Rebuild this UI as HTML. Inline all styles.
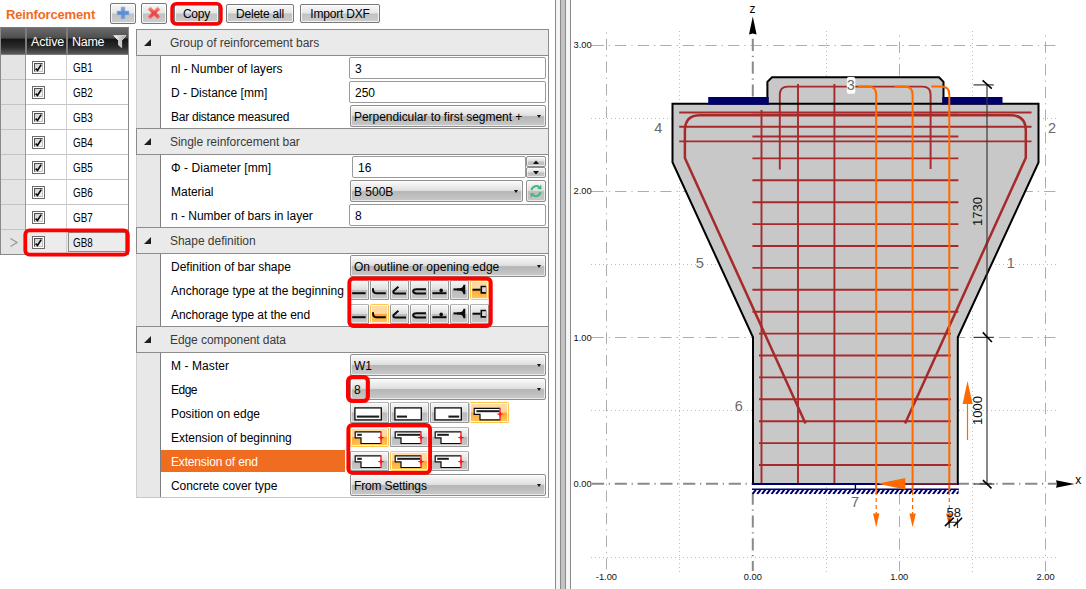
<!DOCTYPE html>
<html>
<head>
<meta charset="utf-8">
<title>Reinforcement</title>
<style>
html,body{margin:0;padding:0;background:#fff;}
body{width:1086px;height:589px;position:relative;overflow:hidden;font-family:"Liberation Sans",sans-serif;font-size:12px;color:#000;}
.abs{position:absolute;}
.t{position:absolute;white-space:nowrap;line-height:14px;font-size:12px;letter-spacing:0;}
#title{left:6px;top:6.5px;font-size:13px;font-weight:bold;color:#f06a1c;letter-spacing:-0.15px;line-height:16px;}
.btn{position:absolute;box-sizing:border-box;border:1px solid #787878;border-radius:2px;
  background:linear-gradient(#f8f8f8 0%,#e6e6e6 47%,#c2c2c2 53%,#cdcdcd 100%);
  box-shadow:inset 0 0 0 1px rgba(255,255,255,.75);text-align:center;font-size:12px;line-height:18px;letter-spacing:-0.2px;white-space:nowrap;}
/* table */
#tbl{left:0;top:27px;width:129px;height:228px;background:#fff;}
#thead{left:0;top:27px;width:129px;height:28px;box-sizing:border-box;border-bottom:1px solid #7c7c7c;background:linear-gradient(#6e6e6e 0%,#4e4e4e 40%,#161616 46%,#2c2c2c 75%,#5a5a5a 100%);}
.hsep{position:absolute;top:27px;width:2px;height:28px;background:#7c7c7c;}
.hl{position:absolute;background:#c4c4c4;}
.cb{position:absolute;left:32px;width:13px;height:13px;box-sizing:border-box;border:1px solid #6a6a6a;background:#fff;}
.cb i{position:absolute;left:1px;top:1px;width:9px;height:9px;box-sizing:border-box;border:1px solid #c4c4c4;border-top-color:#505050;border-left-color:#505050;background:linear-gradient(135deg,#cfcfcf,#f8f8f8);display:block;}
.cb svg{position:absolute;left:1px;top:1px;}
.rowh{position:absolute;left:1px;width:24px;height:24px;background:#e4e4e4;}
/* property grid */
#pg{left:136px;top:29px;width:413px;height:469px;box-sizing:border-box;border:1px solid #8e8e8e;border-left-color:#cfcfcf;border-bottom-color:#c6c6c6;background:#fff;}
.gh{position:absolute;left:136px;width:412px;height:27px;box-sizing:border-box;background:#eaeaea;border-top:1px solid #8c8c8c;border-bottom:1px solid #8c8c8c;border-left:1px solid #8c8c8c;}
.gh + .gh{}
.ind{position:absolute;left:137px;width:23px;background:#e8e8e8;border-right:1px solid #7e7e7e;}
.tri{position:absolute;left:144px;width:0;height:0;border-left:7px solid transparent;border-bottom:7px solid #1e1e1e;}
.ght{color:#3a3a3a;left:170px;}
.lbl{left:171px;}
.inp{position:absolute;box-sizing:border-box;border:1px solid #9a9a9a;border-radius:2px;background:#fff;left:349px;width:197px;height:22px;}
.dd{position:absolute;box-sizing:border-box;border:1px solid #8e8e8e;border-radius:2px;left:350px;width:196px;height:22px;
  background:linear-gradient(#fbfbfb 0%,#e0e0e0 47%,#b6b6b6 53%,#c9c9c9 100%);box-shadow:inset 0 0 0 1px rgba(255,255,255,.6);}
.dd:after{content:"";position:absolute;right:4.5px;top:9px;border-left:2.8px solid transparent;border-right:2.8px solid transparent;border-top:3.3px solid #111;}
.v{left:355px;}
.ib{position:absolute;box-sizing:border-box;border:1px solid #979797;border-top-color:#b4b4b4;border-radius:1.5px;background:linear-gradient(#f8f8f8 0%,#dedede 47%,#bbbbbb 53%,#c8c8c8 100%);box-shadow:inset 0 0 0 1px rgba(255,255,255,.55);}
.ib.on{border-color:#ffc64a;background:linear-gradient(#ffdcaa 0%,#ffd7a0 47%,#ffa733 53%,#ffc95e 100%);box-shadow:inset 0 0 0 1px rgba(255,255,255,.8);}
.sb{position:absolute;box-sizing:border-box;border:1px solid #8e8e8e;border-radius:2px;background:linear-gradient(#f8f8f8 0%,#e0e0e0 47%,#bcbcbc 53%,#c8c8c8 100%);box-shadow:inset 0 0 0 1px rgba(255,255,255,.6);}
</style>
</head>
<body>
<!-- LEFT: title + toolbar -->
<div id="title" class="t">Reinforcement</div>
<div class="btn" style="left:110px;top:3px;width:26px;height:21px;"></div>
<div class="btn" style="left:141px;top:3px;width:26px;height:21px;"></div>
<div class="btn" style="left:174px;top:4px;width:45px;height:19px;">Copy</div>
<div class="btn" style="left:226px;top:4px;width:68px;height:19px;">Delete all</div>
<div class="btn" style="left:300px;top:4px;width:80px;height:19px;">Import DXF</div>
<svg class="abs" style="left:110px;top:3px" width="57" height="21" viewBox="0 0 57 21">
<defs>
<linearGradient id="gpl" x1="0" y1="0" x2="0" y2="1"><stop offset="0" stop-color="#7fa9dc"/><stop offset="0.5" stop-color="#5a8dce"/><stop offset="1" stop-color="#6f9bd6"/></linearGradient>
<linearGradient id="gx" x1="0" y1="0" x2="0" y2="1"><stop offset="0" stop-color="#f68c8c"/><stop offset="0.5" stop-color="#ee3e3e"/><stop offset="1" stop-color="#f26060"/></linearGradient>
</defs>
<path d="M11 4H15V8H19V12H15V16H11V12H7V8H11Z" fill="url(#gpl)" stroke="#9dbde6" stroke-width="0.8" stroke-opacity="0.7"/>
<path d="M40.50 4.00L44.05 7.50L47.60 4.00L50.10 6.50L46.55 10.00L50.10 13.50L47.60 16.00L44.05 12.50L40.50 16.00L38.00 13.50L41.55 10.00L38.00 6.50Z" fill="url(#gx)" stroke="#f59a9a" stroke-width="0.7" stroke-opacity="0.7"/>
</svg>


<!-- LEFT: table -->
<div id="tbl" class="abs"></div>
<div id="thead" class="abs"></div>
<div class="hsep" style="left:25px"></div><div class="hsep" style="left:66px"></div>
<div class="t" style="left:31px;top:35px;color:#fff;font-size:12.5px;letter-spacing:-0.15px;">Active</div>
<div class="t" style="left:72px;top:35px;color:#fff;font-size:12.5px;letter-spacing:-0.3px;">Name</div>
<svg class="abs" style="left:112px;top:34px" width="15" height="15" viewBox="0 0 15 15"><defs><linearGradient id="fg" x1="0" x2="1"><stop offset="0" stop-color="#fff"/><stop offset="1" stop-color="#9a9a9a"/></linearGradient></defs><path d="M1.6 1.6 L14 1.6 L9.6 6.6 L9.6 13.6 L6.6 11 L6.6 6.6 Z" fill="url(#fg)" stroke="#e8e8e8" stroke-width="0.8"/></svg>
<div class="rowh" style="top:55px"></div>
<div class="hl" style="left:0;top:79px;width:129px;height:1px;"></div>
<div class="cb" style="top:61px"><i></i><svg width="9" height="9" viewBox="0 0 9 9"><path d="M1.6 5.6 L3.5 7.4 L7.2 1.6" fill="none" stroke="#0a0a0a" stroke-width="1.7"/></svg></div>
<div class="t" style="left:72.5px;top:61px;font-size:12.3px;transform:scaleX(0.8);transform-origin:0 0;">GB1</div>
<div class="rowh" style="top:80px"></div>
<div class="hl" style="left:0;top:104px;width:129px;height:1px;"></div>
<div class="cb" style="top:86px"><i></i><svg width="9" height="9" viewBox="0 0 9 9"><path d="M1.6 5.6 L3.5 7.4 L7.2 1.6" fill="none" stroke="#0a0a0a" stroke-width="1.7"/></svg></div>
<div class="t" style="left:72.5px;top:86px;font-size:12.3px;transform:scaleX(0.8);transform-origin:0 0;">GB2</div>
<div class="rowh" style="top:105px"></div>
<div class="hl" style="left:0;top:129px;width:129px;height:1px;"></div>
<div class="cb" style="top:111px"><i></i><svg width="9" height="9" viewBox="0 0 9 9"><path d="M1.6 5.6 L3.5 7.4 L7.2 1.6" fill="none" stroke="#0a0a0a" stroke-width="1.7"/></svg></div>
<div class="t" style="left:72.5px;top:111px;font-size:12.3px;transform:scaleX(0.8);transform-origin:0 0;">GB3</div>
<div class="rowh" style="top:130px"></div>
<div class="hl" style="left:0;top:154px;width:129px;height:1px;"></div>
<div class="cb" style="top:136px"><i></i><svg width="9" height="9" viewBox="0 0 9 9"><path d="M1.6 5.6 L3.5 7.4 L7.2 1.6" fill="none" stroke="#0a0a0a" stroke-width="1.7"/></svg></div>
<div class="t" style="left:72.5px;top:136px;font-size:12.3px;transform:scaleX(0.8);transform-origin:0 0;">GB4</div>
<div class="rowh" style="top:155px"></div>
<div class="hl" style="left:0;top:179px;width:129px;height:1px;"></div>
<div class="cb" style="top:161px"><i></i><svg width="9" height="9" viewBox="0 0 9 9"><path d="M1.6 5.6 L3.5 7.4 L7.2 1.6" fill="none" stroke="#0a0a0a" stroke-width="1.7"/></svg></div>
<div class="t" style="left:72.5px;top:161px;font-size:12.3px;transform:scaleX(0.8);transform-origin:0 0;">GB5</div>
<div class="rowh" style="top:180px"></div>
<div class="hl" style="left:0;top:204px;width:129px;height:1px;"></div>
<div class="cb" style="top:186px"><i></i><svg width="9" height="9" viewBox="0 0 9 9"><path d="M1.6 5.6 L3.5 7.4 L7.2 1.6" fill="none" stroke="#0a0a0a" stroke-width="1.7"/></svg></div>
<div class="t" style="left:72.5px;top:186px;font-size:12.3px;transform:scaleX(0.8);transform-origin:0 0;">GB6</div>
<div class="rowh" style="top:205px"></div>
<div class="hl" style="left:0;top:229px;width:129px;height:1px;"></div>
<div class="cb" style="top:211px"><i></i><svg width="9" height="9" viewBox="0 0 9 9"><path d="M1.6 5.6 L3.5 7.4 L7.2 1.6" fill="none" stroke="#0a0a0a" stroke-width="1.7"/></svg></div>
<div class="t" style="left:72.5px;top:211px;font-size:12.3px;transform:scaleX(0.8);transform-origin:0 0;">GB7</div>
<div class="abs" style="left:26px;top:230px;width:102px;height:24px;background:#ececec;"></div>
<div class="rowh" style="top:230px"></div>
<div class="hl" style="left:0;top:254px;width:129px;height:1px;"></div>
<div class="cb" style="top:236px"><i></i><svg width="9" height="9" viewBox="0 0 9 9"><path d="M1.6 5.6 L3.5 7.4 L7.2 1.6" fill="none" stroke="#0a0a0a" stroke-width="1.7"/></svg></div>
<div class="t" style="left:72.5px;top:236px;font-size:12.3px;transform:scaleX(0.8);transform-origin:0 0;">GB8</div>
<div class="hl" style="left:25px;top:55px;width:1px;height:200px;background:#9a9a9a"></div>
<div class="hl" style="left:66px;top:55px;width:1px;height:200px;background:#cfcfcf"></div>
<div class="hl" style="left:0;top:27px;width:1px;height:228px;background:#8a8a8a"></div>
<div class="hl" style="left:128px;top:27px;width:1px;height:228px;background:#8a8a8a"></div>
<div class="hl" style="left:0;top:27px;width:129px;height:1px;background:#7a7a7a"></div>
<div class="hl" style="left:0;top:254px;width:129px;height:1px;background:#8a8a8a"></div>
<div class="abs" style="left:68px;top:232px;width:58px;height:20px;box-sizing:border-box;border:1px solid #8c8c8c;"></div>
<svg class="abs" style="left:9px;top:237px" width="10" height="11" viewBox="0 0 10 11"><path d="M1.5 1.5 L8 5.5 L1.5 9.5" fill="none" stroke="#9a9a9a" stroke-width="1.3"/></svg>

<!-- MIDDLE: property grid -->
<div id="pg" class="abs"></div>
<div class="gh" style="top:29px"></div><div class="tri" style="top:39px"></div><div class="t ght" style="top:36px;letter-spacing:-0.03px;">Group of reinforcement bars</div>
<div class="ind" style="top:56px;height:72px"></div>
<div class="t lbl" style="top:62px;letter-spacing:0.01px;">nl - Number of layers</div>
<div class="inp" style="left:349px;top:57px;width:197px"></div><div class="t v" style="left:355px;top:62px">3</div>
<div class="t lbl" style="top:86px;letter-spacing:0.02px;">D - Distance [mm]</div>
<div class="inp" style="left:349px;top:81px;width:197px"></div><div class="t v" style="left:355px;top:86px">250</div>
<div class="t lbl" style="top:110px;letter-spacing:-0.25px;">Bar distance measured</div>
<div class="dd" style="top:105px;width:196px"></div><div class="t v" style="left:354px;top:110px;letter-spacing:-0.05px;">Perpendicular to first segment +</div>
<div class="gh" style="top:128px"></div><div class="tri" style="top:138px"></div><div class="t ght" style="top:135px;letter-spacing:-0.04px;">Single reinforcement bar</div>
<div class="ind" style="top:155px;height:72px"></div>
<div class="t lbl" style="top:161px;letter-spacing:0.08px;">&#934; - Diameter [mm]</div>
<div class="inp" style="left:352px;top:156px;width:174px"></div><div class="t v" style="left:358px;top:161px">16</div>
<div class="t lbl" style="top:185px;letter-spacing:-0.02px;">Material</div>
<div class="dd" style="top:180px;width:173px"></div><div class="t v" style="left:354px;top:185px;">B 500B</div>
<div class="t lbl" style="top:209px;letter-spacing:-0.01px;">n - Number of bars in layer</div>
<div class="inp" style="left:349px;top:204px;width:197px"></div><div class="t v" style="left:355px;top:209px">8</div>
<div class="gh" style="top:227px"></div><div class="tri" style="top:237px"></div><div class="t ght" style="top:234px;letter-spacing:-0.03px;">Shape definition</div>
<div class="ind" style="top:254px;height:72px"></div>
<div class="t lbl" style="top:260px;letter-spacing:-0.01px;">Definition of bar shape</div>
<div class="dd" style="top:255px;width:196px"></div><div class="t v" style="left:354px;top:260px;letter-spacing:0.02px;">On outline or opening edge</div>
<div class="t lbl" style="top:284px;letter-spacing:0.00px;">Anchorage type at the beginning</div>
<div class="t lbl" style="top:308px;letter-spacing:-0.07px;">Anchorage type at the end</div>
<div class="gh" style="top:326px"></div><div class="tri" style="top:336px"></div><div class="t ght" style="top:333px;letter-spacing:-0.08px;">Edge component data</div>
<div class="ind" style="top:353px;height:144px"></div>
<div class="t lbl" style="top:359px;letter-spacing:0.08px;">M - Master</div>
<div class="dd" style="top:354px;width:196px"></div><div class="t v" style="left:354px;top:359px;">W1</div>
<div class="t lbl" style="top:383px;letter-spacing:-0.51px;">Edge</div>
<div class="dd" style="top:378px;width:196px"></div><div class="t v" style="left:354px;top:383px;">8</div>
<div class="t lbl" style="top:407px;letter-spacing:-0.03px;">Position on edge</div>
<div class="t lbl" style="top:431px;letter-spacing:-0.03px;">Extension of beginning</div>
<div class="abs" style="left:161px;top:450px;width:184px;height:22px;background:#f06c20;"></div>
<div class="t lbl" style="top:455px;color:#fff;letter-spacing:-0.17px;">Extension of end</div>
<div class="t lbl" style="top:479px;letter-spacing:-0.06px;">Concrete cover type</div>
<div class="dd" style="top:474px;width:196px"></div><div class="t v" style="left:354px;top:479px;letter-spacing:-0.15px;">From Settings</div>
<div class="sb" style="left:526px;top:156px;width:20px;height:11px"></div>
<div class="sb" style="left:526px;top:167px;width:20px;height:11px"></div>
<svg class="abs" style="left:526px;top:156px" width="20" height="22"><path d="M7 8 L10 4.4 L13 8Z M7 15 L13 15 L10 18.6Z" fill="#111"/></svg>
<div class="sb" style="left:526px;top:180px;width:20px;height:22px"></div>
<svg class="abs" style="left:526px;top:180px" width="20" height="22" viewBox="0 0 20 22">
<g fill="none" stroke="#3dbb78" stroke-width="2">
<path d="M5.6 10.2 A4.6 4.6 0 0 1 13.2 7.3"/>
<path d="M14.4 12.2 A4.6 4.6 0 0 1 6.8 15.1"/>
</g>
<path d="M11.2 8.9 L15.6 9.3 L15.2 4.6 Z" fill="#3dbb78"/>
<path d="M8.8 13.5 L4.4 13.1 L4.8 17.8 Z" fill="#3dbb78"/>
</svg>
<div class="ib" style="left:350px;top:280px;width:19px;height:20px"></div>
<svg class="abs" style="left:350px;top:281px" width="19" height="19" viewBox="0 0 19 19"><path d="M2.2 12.2H15.6" stroke="#0a0a0a" stroke-width="2" fill="none" stroke-linecap="butt"/></svg>
<div class="ib" style="left:370px;top:280px;width:19px;height:20px"></div>
<svg class="abs" style="left:370px;top:281px" width="19" height="19" viewBox="0 0 19 19"><path d="M3 7.2 V8.4 Q3 12.2 7 12.2 H15.8" stroke="#0a0a0a" stroke-width="2" fill="none" stroke-linecap="butt"/></svg>
<div class="ib" style="left:390px;top:280px;width:19px;height:20px"></div>
<svg class="abs" style="left:390px;top:281px" width="19" height="19" viewBox="0 0 19 19"><path d="M8.4 5.8 L3.6 10 Q2.6 12.4 5.6 12.4 H16" stroke="#0a0a0a" stroke-width="2" fill="none" stroke-linecap="butt" stroke-linejoin="round"/></svg>
<div class="ib" style="left:410px;top:280px;width:19px;height:20px"></div>
<svg class="abs" style="left:410px;top:281px" width="19" height="19" viewBox="0 0 19 19"><path d="M16 8.2 H6.6 Q3.2 8.2 3.2 10.3 Q3.2 12.4 6.6 12.4 H16" stroke="#0a0a0a" stroke-width="2" fill="none" stroke-linecap="butt"/></svg>
<div class="ib" style="left:430px;top:280px;width:19px;height:20px"></div>
<svg class="abs" style="left:430px;top:281px" width="19" height="19" viewBox="0 0 19 19"><path d="M2.4 12.2H16.4" stroke="#0a0a0a" stroke-width="2" fill="none" stroke-linecap="butt"/><circle cx="11.2" cy="9.4" r="1.8" fill="#0a0a0a"/></svg>
<div class="ib" style="left:450px;top:280px;width:19px;height:20px"></div>
<svg class="abs" style="left:450px;top:281px" width="19" height="19" viewBox="0 0 19 19"><path d="M3.4 8.4H12" stroke="#0a0a0a" stroke-width="2" fill="none" stroke-linecap="butt"/><path d="M7 7.5 H9.4 Q12.8 7.2 13.5 3.8 H15.3 V13.2 H13.5 Q12.8 9.7 9.4 9.4 H7 Z" fill="#0a0a0a"/></svg>
<div class="ib on" style="left:470px;top:280px;width:19px;height:20px"></div>
<svg class="abs" style="left:470px;top:281px" width="19" height="19" viewBox="0 0 19 19"><rect x="11.3" y="5.5" width="4.9" height="6.4" fill="#d8d8d8"/><path d="M2.5 8.7H10.6" stroke="#0a0a0a" stroke-width="2" fill="none" stroke-linecap="butt"/><path d="M16 5.5H11.3V11.9H16" stroke="#0a0a0a" stroke-width="1.6" fill="none"/><path d="M16.2 5.2V12.2" stroke="#909090" stroke-width="0.8"/></svg>
<div class="ib" style="left:350px;top:304px;width:19px;height:20px"></div>
<svg class="abs" style="left:350px;top:305px" width="19" height="19" viewBox="0 0 19 19"><path d="M2.2 12.2H15.6" stroke="#0a0a0a" stroke-width="2" fill="none" stroke-linecap="butt"/></svg>
<div class="ib on" style="left:370px;top:304px;width:19px;height:20px"></div>
<svg class="abs" style="left:370px;top:305px" width="19" height="19" viewBox="0 0 19 19"><path d="M3 7.2 V8.4 Q3 12.2 7 12.2 H15.8" stroke="#0a0a0a" stroke-width="2" fill="none" stroke-linecap="butt"/></svg>
<div class="ib" style="left:390px;top:304px;width:19px;height:20px"></div>
<svg class="abs" style="left:390px;top:305px" width="19" height="19" viewBox="0 0 19 19"><path d="M8.4 5.8 L3.6 10 Q2.6 12.4 5.6 12.4 H16" stroke="#0a0a0a" stroke-width="2" fill="none" stroke-linecap="butt" stroke-linejoin="round"/></svg>
<div class="ib" style="left:410px;top:304px;width:19px;height:20px"></div>
<svg class="abs" style="left:410px;top:305px" width="19" height="19" viewBox="0 0 19 19"><path d="M16 8.2 H6.6 Q3.2 8.2 3.2 10.3 Q3.2 12.4 6.6 12.4 H16" stroke="#0a0a0a" stroke-width="2" fill="none" stroke-linecap="butt"/></svg>
<div class="ib" style="left:430px;top:304px;width:19px;height:20px"></div>
<svg class="abs" style="left:430px;top:305px" width="19" height="19" viewBox="0 0 19 19"><path d="M2.4 12.2H16.4" stroke="#0a0a0a" stroke-width="2" fill="none" stroke-linecap="butt"/><circle cx="11.2" cy="9.4" r="1.8" fill="#0a0a0a"/></svg>
<div class="ib" style="left:450px;top:304px;width:19px;height:20px"></div>
<svg class="abs" style="left:450px;top:305px" width="19" height="19" viewBox="0 0 19 19"><path d="M3.4 8.4H12" stroke="#0a0a0a" stroke-width="2" fill="none" stroke-linecap="butt"/><path d="M7 7.5 H9.4 Q12.8 7.2 13.5 3.8 H15.3 V13.2 H13.5 Q12.8 9.7 9.4 9.4 H7 Z" fill="#0a0a0a"/></svg>
<div class="ib" style="left:470px;top:304px;width:19px;height:20px"></div>
<svg class="abs" style="left:470px;top:305px" width="19" height="19" viewBox="0 0 19 19"><rect x="11.3" y="5.5" width="4.9" height="6.4" fill="#d8d8d8"/><path d="M2.5 8.7H10.6" stroke="#0a0a0a" stroke-width="2" fill="none" stroke-linecap="butt"/><path d="M16 5.5H11.3V11.9H16" stroke="#0a0a0a" stroke-width="1.6" fill="none"/><path d="M16.2 5.2V12.2" stroke="#909090" stroke-width="0.8"/></svg>
<div class="ib" style="left:350px;top:402px;width:39px;height:21px"></div>
<svg class="abs" style="left:350px;top:402.5px" width="39" height="21" viewBox="0 0 39 21"><rect x="4.9" y="4.9" width="26.4" height="12" stroke="#0a0a0a" stroke-width="1.3" fill="#fff"/><path d="M6.8 13.6H29.2" stroke="#1c1c1c" stroke-width="2.1" fill="none"/></svg>
<div class="ib" style="left:390px;top:402px;width:39px;height:21px"></div>
<svg class="abs" style="left:390px;top:402.5px" width="39" height="21" viewBox="0 0 39 21"><rect x="4.9" y="4.9" width="26.4" height="12" stroke="#0a0a0a" stroke-width="1.3" fill="#fff"/><path d="M6.8 13.6H17" stroke="#1c1c1c" stroke-width="2.1" fill="none"/></svg>
<div class="ib" style="left:430px;top:402px;width:39px;height:21px"></div>
<svg class="abs" style="left:430px;top:402.5px" width="39" height="21" viewBox="0 0 39 21"><rect x="4.9" y="4.9" width="26.4" height="12" stroke="#0a0a0a" stroke-width="1.3" fill="#fff"/><path d="M18.4 13.6H29.2" stroke="#1c1c1c" stroke-width="2.1" fill="none"/></svg>
<div class="ib on" style="left:469px;top:402px;width:40px;height:21px"></div>
<svg class="abs" style="left:469.3px;top:402.5px" width="39" height="21" viewBox="0 0 39 21"><path d="M5.2 5.300000000000001H31V16.9H11V11.3H5.2Z" fill="#fff"/><path d="M31 5.300000000000001H5.2V11.3H11V16.9H31" stroke="#0a0a0a" stroke-width="1.2" fill="#fff" stroke-linejoin="miter" fill-opacity="0"/><path d="M7.4 8.200000000000001H30.6" stroke="#1c1c1c" stroke-width="2" fill="none"/><path d="M31 4.700000000000001V17.5" stroke="#ff1414" stroke-width="1.3"/><path d="M27.4 11.100000000000001 L30.2 10.200000000000001 L31 8.100000000000001 L31.8 10.200000000000001 L34.6 11.100000000000001 L31.8 12.000000000000002 L31 14.100000000000001 L30.2 12.000000000000002Z" fill="#ff1414"/></svg>
<div class="ib on" style="left:350px;top:427px;width:39px;height:20px"></div>
<svg class="abs" style="left:350px;top:427px" width="39" height="21" viewBox="0 0 39 21"><path d="M5.2 4.9H31V16.5H11V10.9H5.2Z" fill="#fff"/><path d="M31 4.9H5.2V10.9H11V16.5H31" stroke="#0a0a0a" stroke-width="1.2" fill="#fff" stroke-linejoin="miter" fill-opacity="0"/><path d="M7.2 7.800000000000001H11.8" stroke="#1c1c1c" stroke-width="2" fill="none"/><path d="M31 4.300000000000001V17.1" stroke="#ff1414" stroke-width="1.3"/><path d="M27.4 10.700000000000001 L30.2 9.8 L31 7.700000000000001 L31.8 9.8 L34.6 10.700000000000001 L31.8 11.600000000000001 L31 13.700000000000001 L30.2 11.600000000000001Z" fill="#ff1414"/></svg>
<div class="ib" style="left:390px;top:427px;width:39px;height:20px"></div>
<svg class="abs" style="left:390px;top:427px" width="39" height="21" viewBox="0 0 39 21"><path d="M5.2 4.9H31V16.5H11V10.9H5.2Z" fill="#fff"/><path d="M31 4.9H5.2V10.9H11V16.5H31" stroke="#0a0a0a" stroke-width="1.2" fill="#fff" stroke-linejoin="miter" fill-opacity="0"/><path d="M7.2 7.800000000000001H30.4" stroke="#1c1c1c" stroke-width="2" fill="none"/><path d="M31 4.300000000000001V17.1" stroke="#ff1414" stroke-width="1.3"/><path d="M27.4 10.700000000000001 L30.2 9.8 L31 7.700000000000001 L31.8 9.8 L34.6 10.700000000000001 L31.8 11.600000000000001 L31 13.700000000000001 L30.2 11.600000000000001Z" fill="#ff1414"/></svg>
<div class="ib" style="left:430px;top:427px;width:39px;height:20px"></div>
<svg class="abs" style="left:430px;top:427px" width="39" height="21" viewBox="0 0 39 21"><path d="M5.2 4.9H31V16.5H11V10.9H5.2Z" fill="#fff"/><path d="M31 4.9H5.2V10.9H11V16.5H31" stroke="#0a0a0a" stroke-width="1.2" fill="#fff" stroke-linejoin="miter" fill-opacity="0"/><path d="M7.2 7.800000000000001H18.8" stroke="#1c1c1c" stroke-width="2" fill="none"/><path d="M31 4.300000000000001V17.1" stroke="#ff1414" stroke-width="1.3"/><path d="M27.4 10.700000000000001 L30.2 9.8 L31 7.700000000000001 L31.8 9.8 L34.6 10.700000000000001 L31.8 11.600000000000001 L31 13.700000000000001 L30.2 11.600000000000001Z" fill="#ff1414"/></svg>
<div class="ib" style="left:350px;top:451px;width:39px;height:20px"></div>
<svg class="abs" style="left:350px;top:451px" width="39" height="21" viewBox="0 0 39 21"><path d="M5.2 4.9H31V16.5H11V10.9H5.2Z" fill="#fff"/><path d="M31 4.9H5.2V10.9H11V16.5H31" stroke="#0a0a0a" stroke-width="1.2" fill="#fff" stroke-linejoin="miter" fill-opacity="0"/><path d="M7.2 7.800000000000001H11.8" stroke="#1c1c1c" stroke-width="2" fill="none"/><path d="M31 4.300000000000001V17.1" stroke="#ff1414" stroke-width="1.3"/><path d="M27.4 10.700000000000001 L30.2 9.8 L31 7.700000000000001 L31.8 9.8 L34.6 10.700000000000001 L31.8 11.600000000000001 L31 13.700000000000001 L30.2 11.600000000000001Z" fill="#ff1414"/></svg>
<div class="ib on" style="left:390px;top:451px;width:39px;height:20px"></div>
<svg class="abs" style="left:390px;top:451px" width="39" height="21" viewBox="0 0 39 21"><path d="M5.2 4.9H31V16.5H11V10.9H5.2Z" fill="#fff"/><path d="M31 4.9H5.2V10.9H11V16.5H31" stroke="#0a0a0a" stroke-width="1.2" fill="#fff" stroke-linejoin="miter" fill-opacity="0"/><path d="M7.2 7.800000000000001H30.4" stroke="#1c1c1c" stroke-width="2" fill="none"/><path d="M31 4.300000000000001V17.1" stroke="#ff1414" stroke-width="1.3"/><path d="M27.4 10.700000000000001 L30.2 9.8 L31 7.700000000000001 L31.8 9.8 L34.6 10.700000000000001 L31.8 11.600000000000001 L31 13.700000000000001 L30.2 11.600000000000001Z" fill="#ff1414"/></svg>
<div class="ib" style="left:430px;top:451px;width:39px;height:20px"></div>
<svg class="abs" style="left:430px;top:451px" width="39" height="21" viewBox="0 0 39 21"><path d="M5.2 4.9H31V16.5H11V10.9H5.2Z" fill="#fff"/><path d="M31 4.9H5.2V10.9H11V16.5H31" stroke="#0a0a0a" stroke-width="1.2" fill="#fff" stroke-linejoin="miter" fill-opacity="0"/><path d="M7.2 7.800000000000001H18.8" stroke="#1c1c1c" stroke-width="2" fill="none"/><path d="M31 4.300000000000001V17.1" stroke="#ff1414" stroke-width="1.3"/><path d="M27.4 10.700000000000001 L30.2 9.8 L31 7.700000000000001 L31.8 9.8 L34.6 10.700000000000001 L31.8 11.600000000000001 L31 13.700000000000001 L30.2 11.600000000000001Z" fill="#ff1414"/></svg>

<!-- splitter -->
<div class="abs" style="left:555px;top:0;width:16px;height:589px;background:linear-gradient(90deg,#8a8a8a 0,#8a8a8a 1px,#f4f4f4 1px,#f4f4f4 5px,#8a8a8a 5px,#8a8a8a 6px,#c2c2c2 6px,#c2c2c2 10px,#8a8a8a 10px,#8a8a8a 11px,#f4f4f4 11px,#f4f4f4 15px,#8a8a8a 15px,#8a8a8a 16px);"></div>

<!-- RIGHT: drawing -->
<svg class="abs" style="left:0;top:0" width="1086" height="589" viewBox="0 0 1086 589" font-family="Liberation Sans, sans-serif">
<g stroke="#bcbcbc" stroke-width="1" stroke-dasharray="1 3" fill="none">
<path d="M679.5 31V572"/>
<path d="M826.5 31V572"/>
<path d="M972.5 31V572"/>
<path d="M591 118.5H1058"/>
<path d="M591 264.5H1058"/>
<path d="M591 410.5H1058"/>
<path d="M591 557.5H1058"/>
</g>
<g stroke="#adadad" stroke-width="1" stroke-dasharray="11.3 5 1.28 5" fill="none">
<path d="M606.5 30.5V571.4" stroke-dashoffset="14.25"/>
<path d="M899.5 30.5V571.4" stroke-dashoffset="11.45"/>
<path d="M1045.5 30.5V571.4" stroke-dashoffset="11.45"/>
<path d="M592.5 45.5H1058"/>
<path d="M592.5 191.5H1058"/>
<path d="M592.5 337.5H1058"/>
</g>
<g stroke="#adadad" stroke-width="1" fill="none">
<path d="M591 45.5H593"/>
<path d="M591 191.5H593"/>
<path d="M591 337.5H593"/>
</g>
<g stroke="#8a8a8a" stroke-width="2" stroke-dasharray="12.2 4.7 1.2 4.7" fill="none">
<path d="M752.8 38.8V100"/>
<path d="M752.8 492.6V571"/>
<path d="M591.9 483.8H1058"/>
</g>
<path d="M752.8 16.5 L756.6 34.6 L752.8 33.6 L749 34.6 Z" fill="#000"/>
<path d="M1074.6 484 L1056 480.3 L1057 484 L1056 487.7 Z" fill="#000"/>
<text x="752.6" y="13" font-size="12" text-anchor="middle" fill="#000">z</text>
<text x="1078.3" y="483.5" font-size="12" text-anchor="middle" fill="#000">x</text>
<g font-size="9.3" fill="#111">
<text x="573.6" y="48.1">3.00</text>
<text x="573.6" y="194.4">2.00</text>
<text x="573.6" y="340.7">1.00</text>
<text x="573.6" y="487.0">0.00</text>
<text x="606.4" y="580" text-anchor="middle">-1.00</text>
<text x="752.8" y="580" text-anchor="middle">0.00</text>
<text x="899.2" y="580" text-anchor="middle">1.00</text>
<text x="1045.6" y="580" text-anchor="middle">2.00</text>
</g>
<path d="M753 484 V337.3 L672.5 162.2 V103.7 H767.4 V81.8 L772 77.2 H939 L943.5 81.8 V103.7 H1038.5 V162.5 L957.8 337.3 V484 Z" fill="#c8c8c8" stroke="none"/>
<g stroke="#a62a2a" stroke-width="1.9" fill="none">
<path d="M679.2 112.5H1031.5"/>
<path d="M679.2 126.8H1031.5"/>
<path d="M679.2 141.4H1031.5"/>
<path d="M752.4 114.6H958.4"/>
<path d="M752.4 136.5H958.4"/>
<path d="M752.4 158.4H958.4"/>
<path d="M752.4 180.3H958.4"/>
<path d="M752.4 202.2H958.4"/>
<path d="M752.4 224.1H958.4"/>
<path d="M752.4 246.0H958.4"/>
<path d="M752.4 267.9H958.4"/>
<path d="M752.4 289.8H958.4"/>
<path d="M752.4 311.7H958.4"/>
<path d="M759 333.6H951"/>
<path d="M759 355.5H951"/>
<path d="M759 377.4H951"/>
<path d="M759 399.3H951"/>
<path d="M759 421.2H951"/>
<path d="M759 443.1H951"/>
<path d="M759 465.0H951"/>
<path d="M761.5 110V483"/>
<path d="M798 84V483"/>
<path d="M834.4 84V483"/>
<path d="M779.8 169.4V94.6 Q779.8 86.6 787.8 86.6 H922.6 Q930.6 86.6 930.6 94.6 V169"/>
</g>
<path d="M805.5 423.4 L684.9 158.1 V130.5 Q684.9 115.3 700 115.3 H1010.6 Q1025.8 115.3 1025.8 130.5 V157.8 L905.1 423.4" stroke="#a62a2a" stroke-width="2.5" fill="none" stroke-linejoin="round"/>
<path d="M753 484 V337.3 L672.5 162.2 V103.7 H767.4 V81.8 L772 77.2 H939 L943.5 81.8 V103.7 H1038.5 V162.5 L957.8 337.3 V484 Z" fill="none" stroke="#000" stroke-width="2" stroke-linejoin="miter"/>
<path d="M767.4 103.7H943.5" stroke="#000" stroke-width="2"/>
<rect x="708.2" y="97" width="60.5" height="7.6" fill="#00006c"/>
<rect x="942.3" y="97" width="60.2" height="7.4" fill="#00006c"/>
<path d="M752 484H958.8" stroke="#00006c" stroke-width="2"/>
<path d="M752 489.2H958.8" stroke="#00006c" stroke-width="1.6"/>
<path d="M855.4 484V489" stroke="#00006c" stroke-width="1.4"/>
<clipPath id="hc"><rect x="752" y="488" width="206.6" height="6.2"/></clipPath>
<path d="M752.5 494.2L755.9 489.6 M757.2 494.2L760.6 489.6 M762.0 494.2L765.4 489.6 M766.8 494.2L770.1 489.6 M771.5 494.2L774.9 489.6 M776.2 494.2L779.6 489.6 M781.0 494.2L784.4 489.6 M785.8 494.2L789.1 489.6 M790.5 494.2L793.9 489.6 M795.2 494.2L798.6 489.6 M800.0 494.2L803.4 489.6 M804.8 494.2L808.1 489.6 M809.5 494.2L812.9 489.6 M814.2 494.2L817.6 489.6 M819.0 494.2L822.4 489.6 M823.8 494.2L827.1 489.6 M828.5 494.2L831.9 489.6 M833.2 494.2L836.6 489.6 M838.0 494.2L841.4 489.6 M842.8 494.2L846.1 489.6 M847.5 494.2L850.9 489.6 M852.2 494.2L855.6 489.6 M857.0 494.2L860.4 489.6 M861.8 494.2L865.1 489.6 M866.5 494.2L869.9 489.6 M871.2 494.2L874.6 489.6 M876.0 494.2L879.4 489.6 M880.8 494.2L884.1 489.6 M885.5 494.2L888.9 489.6 M890.2 494.2L893.6 489.6 M895.0 494.2L898.4 489.6 M899.8 494.2L903.1 489.6 M904.5 494.2L907.9 489.6 M909.2 494.2L912.6 489.6 M914.0 494.2L917.4 489.6 M918.8 494.2L922.1 489.6 M923.5 494.2L926.9 489.6 M928.2 494.2L931.6 489.6 M933.0 494.2L936.4 489.6 M937.8 494.2L941.1 489.6 M942.5 494.2L945.9 489.6 M947.2 494.2L950.6 489.6 M952.0 494.2L955.4 489.6 M956.8 494.2L960.1 489.6" stroke="#00006c" stroke-width="2" fill="none" clip-path="url(#hc)"/>
<g stroke="#ff6a00" stroke-width="2" fill="none">
<path d="M858 86.5H868.2 Q876.2 86.5 876.2 94.5 V490.5"/>
<path d="M894.6 86.5H904.6 Q912.6 86.5 912.6 94.5 V490.5"/>
<path d="M931.3 86.5H941.3 Q949.3 86.5 949.3 94.5 V490.5"/>
</g>
<g stroke="#ff6a00" stroke-width="1.2" stroke-dasharray="4 3" fill="none">
<path d="M876.2 491V514"/>
<path d="M912.6 491V514"/>
<path d="M949.3 491V514"/>
</g>
<path d="M873.0 513.4H879.4000000000001L876.2 527.2Z" fill="#ff6a00"/>
<path d="M909.4 513.4H915.8000000000001L912.6 527.2Z" fill="#ff6a00"/>
<path d="M946.0999999999999 513.4H952.5L949.3 527.2Z" fill="#ff6a00"/>
<path d="M905 483.8H957" stroke="#8c2222" stroke-width="1.8"/>
<path d="M877.6 483.8 L905.3 478 V489.6 Z" fill="#ff6a00"/>
<path d="M967.5 381 L972.6 404 H962.6 Z" fill="#ff6a00"/>
<path d="M967.5 403V440" stroke="#ff6a00" stroke-width="1.2"/>
<g stroke="#3a3a3a" stroke-width="1.2" fill="none">
<path d="M987 84.9V484"/>
<path d="M973.5 84.9H993.8"/>
<path d="M973.5 337.4H993.8"/>
<path d="M973.5 484H994.4"/>
<path d="M949.2 518.4V528"/><path d="M957.5 518.4V528"/><path d="M949.2 522.3H957.5"/>
</g>
<g stroke="#000" stroke-width="1.6" fill="none">
<path d="M982.6 80.4L991.8 88.6"/>
<path d="M982.8 332.4L991.9 342"/>
<path d="M982.9 480.1L991.5 488.3"/>
<path d="M944.9 526.2L953.7 517.7"/><path d="M953.7 526.2L962.1 517.7"/>
</g>
<g font-size="13" fill="#111" text-anchor="middle">
<text transform="translate(982.3 211.5) rotate(-90)">1730</text>
<text transform="translate(982 410.5) rotate(-90)">1000</text>
<text x="953.8" y="517">58</text>
</g>
<rect x="846.8" y="77" width="8.5" height="16.8" rx="2" fill="#fff"/>
<g font-size="14.5" fill="#6a6a6a" text-anchor="middle">
<text x="850.9" y="90.2">3</text>
<text x="658.3" y="132.6">4</text>
<text x="1052" y="133">2</text>
<text x="699.8" y="267.6">5</text>
<text x="1010.8" y="268">1</text>
<text x="738.7" y="410.8">6</text>
<text x="855" y="507.4">7</text>
</g>
</svg>

<!-- red highlight frames -->
<svg class="abs" style="left:0;top:0" width="560" height="589" viewBox="0 0 560 589"><g fill="none" stroke="#ff0000">
<rect x="172.10" y="3.70" width="48.80" height="20.30" rx="4.2" stroke-width="3.6"/>
<rect x="25.30" y="230.30" width="102.50" height="24.30" rx="4.1" stroke-width="3.8"/>
<rect x="349.35" y="278.55" width="141.40" height="47.50" rx="4.0" stroke-width="3.9"/>
<rect x="348.05" y="377.15" width="19.80" height="23.70" rx="4.0" stroke-width="4.1"/>
<rect x="348.30" y="425.00" width="81.80" height="47.90" rx="4.1" stroke-width="3.8"/>
</g></svg>
</body>
</html>
